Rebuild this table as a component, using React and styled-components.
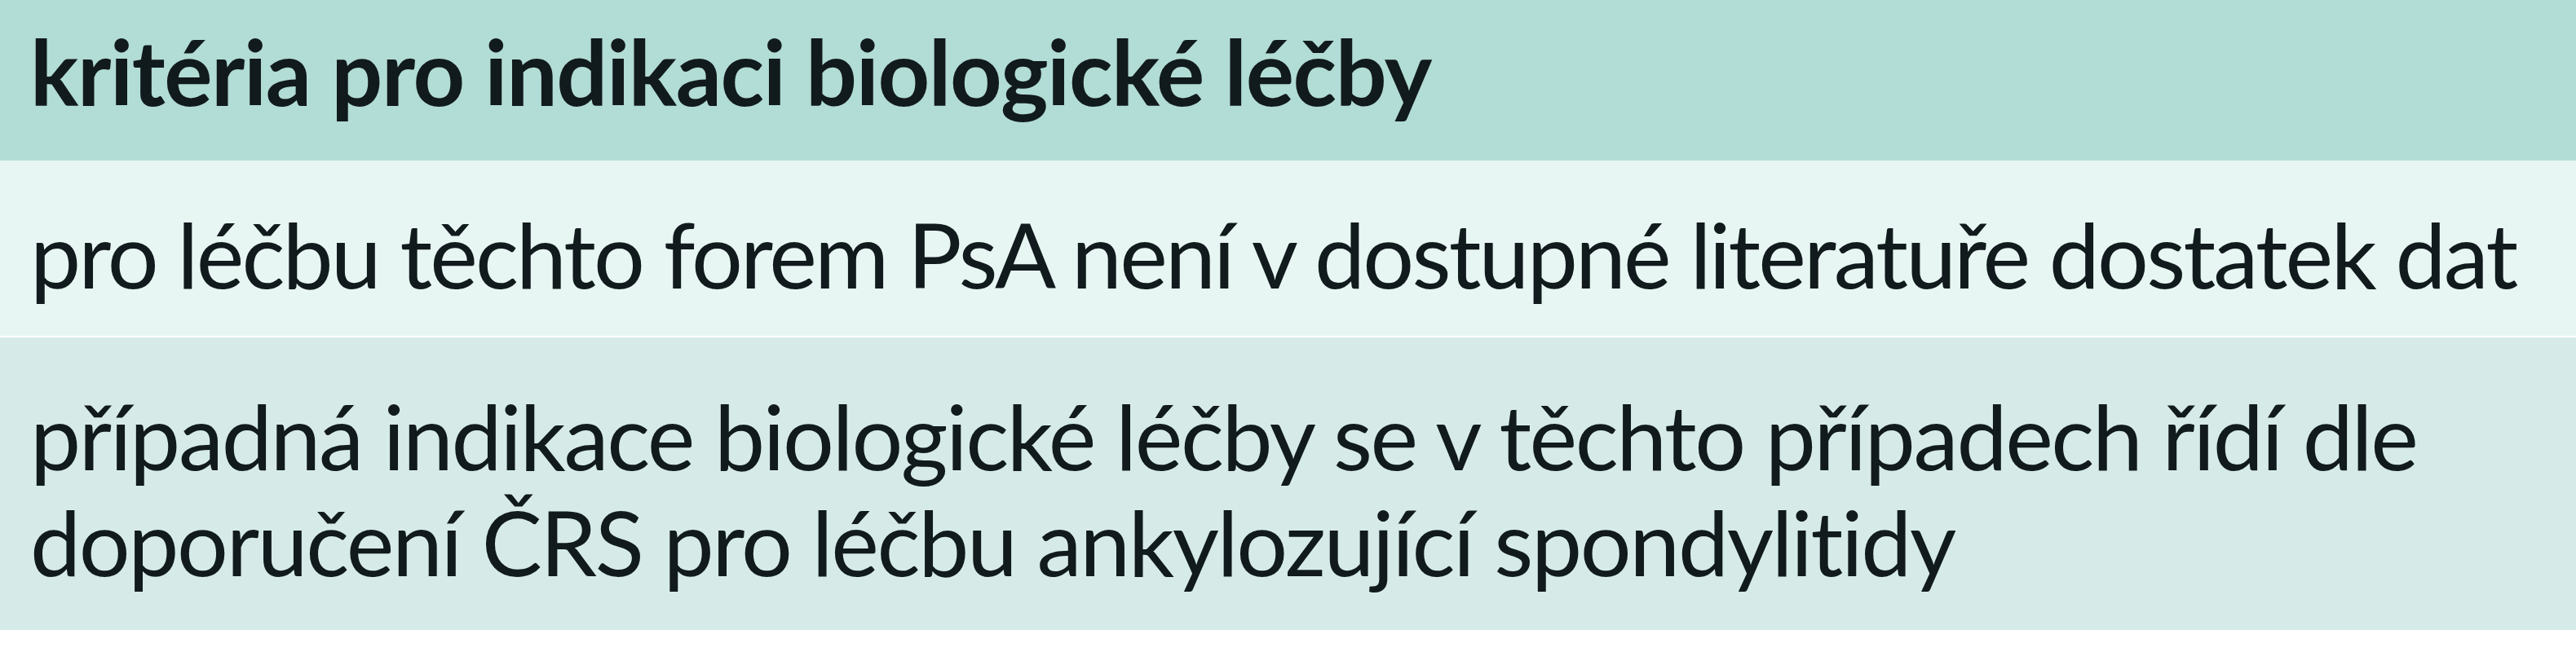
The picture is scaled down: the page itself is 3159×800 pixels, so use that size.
import React from "react";
import styled, { createGlobalStyle } from "styled-components";

const Global = createGlobalStyle`
  html, body { margin: 0; padding: 0; background: #ffffff; }
  body { font-family: "Lato", "Liberation Sans", sans-serif; color: #111a1c; }
`;

const Table = styled.div`
  display: flex;
  flex-direction: column;
  width: 3159px;
  background: #ffffff;
`;

const Row = styled.div`
  display: flex;
  align-items: flex-start;
  box-sizing: border-box;
  height: ${(p) => p.$h}px;
  padding: ${(p) => p.$pt}px 0 0 37px;
  background: ${(p) => p.$bg};
  margin-bottom: ${(p) => p.$mb || 0}px;
`;

const Cell = styled.div`
  font-size: 111px;
  line-height: 130px;
  font-weight: ${(p) => (p.$bold ? 700 : 400)};
  letter-spacing: ${(p) => p.$ls}px;
  white-space: nowrap;
`;

export default function App() {
  return (
    <>
      <Global />
      <Table>
        <Row $h={197} $pt={22} $bg="#b2dcd6">
          <Cell $bold $ls={-1.4}>kritéria pro indikaci biologické léčby</Cell>
        </Row>
        <Row $h={215} $pt={49} $bg="#e7f6f3" $mb={2}>
          <Cell $ls={-2.85}>pro léčbu těchto forem PsA není v dostupné literatuře dostatek dat</Cell>
        </Row>
        <Row $h={359} $pt={55} $bg="#d6ebe8">
          <Cell $ls={-2.4}>
            případná indikace biologické léčby se v těchto případech řídí dle
            <br />
            doporučení ČRS pro léčbu ankylozující spondylitidy
          </Cell>
        </Row>
      </Table>
    </>
  );
}
